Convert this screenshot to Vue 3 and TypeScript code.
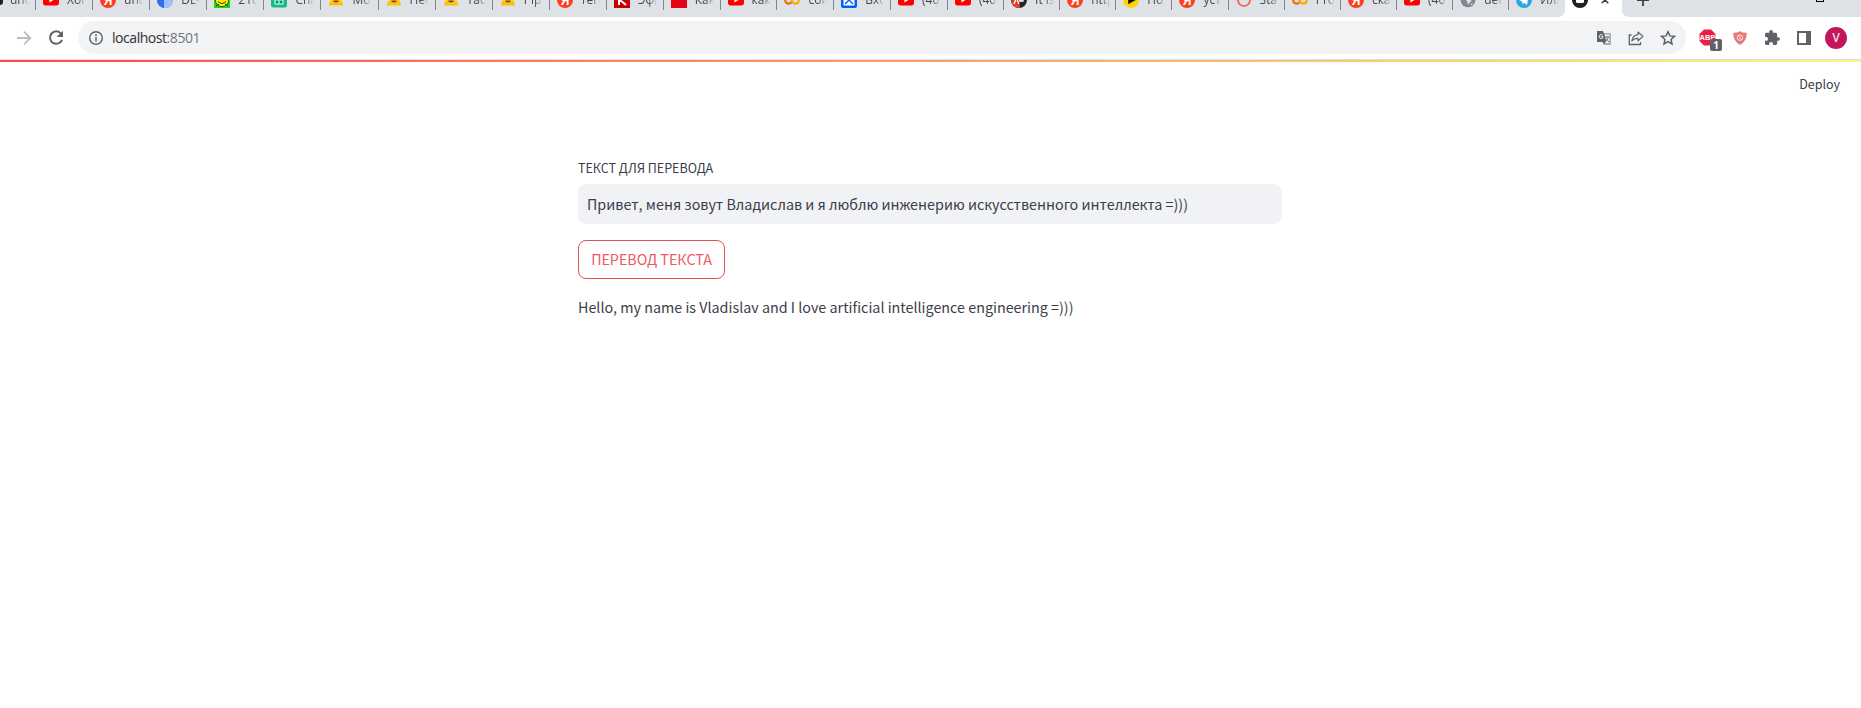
<script setup lang="ts">
interface Tab {
  icon: string
  title: string
}

const tabs: Tab[] = [
  { icon: 'youtube', title: 'Хоп' },
  { icon: 'yandex', title: 'unc' },
  { icon: 'blue', title: 'DL-' },
  { icon: 'smile', title: '21с' },
  { icon: 'robot', title: 'Cha' },
  { icon: 'hug', title: 'Mo' },
  { icon: 'hug', title: 'Hel' },
  { icon: 'hug', title: 'Tac' },
  { icon: 'hug', title: 'Pip' },
  { icon: 'yandex', title: 'тега' },
  { icon: 'k', title: 'Эф(' },
  { icon: 'red', title: 'Как' },
  { icon: 'youtube', title: 'как' },
  { icon: 'colab', title: 'coll' },
  { icon: 'mail', title: 'Вхо' },
  { icon: 'youtube', title: '(40' },
  { icon: 'youtube', title: '(40' },
  { icon: 'ap', title: 'It is' },
  { icon: 'yandex', title: 'http' },
  { icon: 'play', title: 'По' },
  { icon: 'yandex', title: 'уст' },
  { icon: 'ring', title: 'Sta' },
  { icon: 'colab', title: 'Pro' },
  { icon: 'yandex', title: 'ска' },
  { icon: 'youtube', title: '(40' },
  { icon: 'globe', title: 'def' },
  { icon: 'telegram', title: 'Илл' },
]

function tabWidth(i: number): number {
  if (i < 10) return 57.1
  if (i < 16) return 56.83
  return 56.15
}
</script>

<template>
  <div class="window">
    <div class="tabstrip">
      <div class="tab tab-cut">
        <span class="dot"></span>
        <span class="title">unc</span>
      </div>
      <div
        v-for="(tab, i) in tabs"
        :key="i"
        class="tab"
        :class="{ last: i === tabs.length - 1 }"
        :style="{ width: tabWidth(i) + 'px' }"
      >
        <svg class="favicon" viewBox="0 0 16 16">
          <template v-if="tab.icon === 'youtube'">
            <rect x="0" y="2" width="16" height="11.4" rx="2.6" fill="#f00" />
            <path d="M6.4 5.2v5.2l4.4-2.6z" fill="#fff" />
          </template>
          <template v-else-if="tab.icon === 'yandex'">
            <circle cx="8" cy="8" r="8" fill="#fc3f1d" />
            <text x="8" y="13" class="ya">Я</text>
          </template>
          <template v-else-if="tab.icon === 'blue'">
            <circle cx="8" cy="8" r="8" fill="#5b8ff5" />
            <path d="M0 8h7v8A8 8 0 0 1 0 8z" fill="#2f6df0" />
            <path d="M7 6h9v2a8 8 0 0 1-9 8z" fill="#9fc0fb" />
          </template>
          <template v-else-if="tab.icon === 'smile'">
            <rect width="16" height="16" fill="#0be30b" />
            <circle cx="8" cy="8" r="6.6" fill="#fff200" stroke="#333" stroke-width=".8" />
            <path d="M4 9.5q4 4 8 0M2 14l3-2M14 14l-3-2" fill="none" stroke="#333" />
          </template>
          <template v-else-if="tab.icon === 'robot'">
            <rect width="16" height="15.5" rx="2.5" fill="#19b888" />
            <rect x="3" y="7" width="10" height="6" rx="2" fill="#7fe3c2" />
            <circle cx="6" cy="10" r="1.2" fill="#0b7f5b" />
            <circle cx="10" cy="10" r="1.2" fill="#0b7f5b" />
          </template>
          <template v-else-if="tab.icon === 'hug'">
            <circle cx="8" cy="7" r="6.2" fill="#ffd21e" />
            <path d="M1 13.5q0-4 3-4.5l2 2h4l2-2q3 .5 3 4.5z" fill="#ffbe0a" />
            <path d="M5.4 8.6h5.2v1.2q-2.6 1.6-5.2 0z" fill="#6b4b2a" />
          </template>
          <template v-else-if="tab.icon === 'k'">
            <rect width="16" height="16" fill="#c40000" />
            <path d="M5 3v10M11.5 3L6 8l6 5" fill="none" stroke="#fff" stroke-width="2" />
          </template>
          <template v-else-if="tab.icon === 'red'">
            <rect width="16" height="16" fill="#e30613" />
            <path d="M8 0h8v8z" fill="#f6402a" />
          </template>
          <template v-else-if="tab.icon === 'colab'">
            <circle cx="4.6" cy="8.3" r="3.4" fill="none" stroke="#e8710a" stroke-width="2.2" />
            <circle cx="11.4" cy="8.3" r="3.4" fill="none" stroke="#f9ab00" stroke-width="2.2" />
          </template>
          <template v-else-if="tab.icon === 'mail'">
            <rect width="16" height="16" rx="2" fill="#005ff9" />
            <rect x="2.5" y="4" width="11" height="9.5" fill="#fff" />
            <path d="M4 12l4-4 4 4" fill="none" stroke="#005ff9" stroke-width="1.4" />
          </template>
          <template v-else-if="tab.icon === 'ap'">
            <circle cx="8" cy="8" r="8" fill="#252525" />
            <path d="M8 0A8 8 0 1 0 9 16L8 10l4-8z" fill="#ef4023" />
            <path d="M3 12L5.5 6 8 12M9 10V6h3v3h-3" fill="none" stroke="#fff" stroke-width="1.3" />
          </template>
          <template v-else-if="tab.icon === 'play'">
            <circle cx="8" cy="8" r="8" fill="#ffd400" />
            <path d="M5.2 3.5v8.8l7.8-4.4z" fill="#111" />
          </template>
          <template v-else-if="tab.icon === 'ring'">
            <circle cx="8" cy="8" r="6" fill="none" stroke="#f05a4a" stroke-width="1.7" />
          </template>
          <template v-else-if="tab.icon === 'globe'">
            <circle cx="8" cy="8" r="7.3" fill="#80868b" />
            <path d="M3 6l4 3 1 4 2-3 2-1-3-2-4-2zM10 12l3-1-1 2z" fill="#dee1e6" />
          </template>
          <template v-else>
            <circle cx="8" cy="8" r="8" fill="#2ca5e0" />
            <path d="M3 8l9.5-4-1.5 9-3-2.2-1.5 1.4-.4-2.6z" fill="#fff" />
          </template>
        </svg>
        <span class="title">{{ tab.title }}</span>
      </div>
      <div class="tab-active">
        <svg class="fav-active" viewBox="0 0 16 16">
          <circle cx="8" cy="8" r="8" fill="#202124" />
          <rect x="4" y="6" width="8" height="5" rx="1.5" fill="#fff" />
        </svg>
        <svg class="close" viewBox="0 0 8 8">
          <path d="M.7.7l6.6 6.6M7.3.7L.7 7.3" stroke="#3c4043" stroke-width="1.5" />
        </svg>
      </div>
      <div class="strip-rest">
        <svg class="plus" viewBox="0 0 14 14">
          <path d="M7 1v12M1 7h12" stroke="#3c4043" stroke-width="1.8" />
        </svg>
        <span class="maximize"></span>
      </div>
    </div>

    <div class="toolbar">
      <svg class="forward" viewBox="0 0 16 16">
        <path d="M1 8h13M8 1.7L14.3 8 8 14.3" fill="none" stroke="#babcbe" stroke-width="1.8" />
      </svg>
      <svg class="reload" viewBox="0 0 16 16">
        <path d="M13 3.6A6.2 6.2 0 1 0 14 9.8" fill="none" stroke="#5f6368" stroke-width="2" />
        <path d="M15 .8v6.3H8.7z" fill="#5f6368" />
      </svg>
      <div class="omnibox">
        <svg class="info" viewBox="0 0 16 16">
          <circle cx="8" cy="8" r="6.3" fill="none" stroke="#5f6368" stroke-width="1.4" />
          <path d="M8 7v4.5M8 4.3v1.6" stroke="#5f6368" stroke-width="1.5" />
        </svg>
        <span class="url">localhost<span class="port">:8501</span></span>
        <div class="omni-actions">
          <svg viewBox="0 0 16 16">
            <path d="M1 1h6l1 2.5h6.5v11H7.5L6.8 12H1z" fill="#5f6368" />
            <path d="M8.4 4.3h5.3v9.3H8.2l2-2z" fill="#f1f3f4" />
            <path d="M6.7 5.3A2 2 0 1 0 6.6 8q.5-.5.4-1.3H5" fill="none" stroke="#f1f3f4" />
            <path d="M9 7h4.5M11 6v1M12.5 7q-.8 2.8-3 4M10 8.5l3 3.5" fill="none" stroke="#5f6368" stroke-width=".9" />
          </svg>
          <svg viewBox="0 0 16 16">
            <path d="M3.5 5H1.3v9.5h11.2V12" fill="none" stroke="#5f6368" stroke-width="1.3" />
            <path d="M10 2l5 4.4-5 4.4V8.3Q6 8.2 3.8 11 4.7 5.3 10 4.6z" fill="none" stroke="#5f6368" stroke-width="1.2" stroke-linejoin="round" />
          </svg>
          <svg viewBox="0 0 16 16">
            <path d="M8 1.7l1.9 4.2 4.6.5-3.4 3.1.9 4.5-4-2.3L4 14l.9-4.5L1.5 6.4l4.6-.5z" fill="none" stroke="#5f6368" stroke-width="1.5" />
          </svg>
        </div>
      </div>
      <div class="extensions">
        <div class="abp">
          <svg viewBox="0 0 17 17">
            <path d="M5 .5h7L16.500 5v7L12 16.500H5L.5 12V5z" fill="#ed1e45" />
            <text x="8.5" y="11.3" class="abp-text">ABP</text>
          </svg>
          <span class="badge">1</span>
        </div>
        <svg class="shield" viewBox="0 0 14 14">
          <path d="M7 .3Q10 2 13.7 1.8 14.2 10 7 13.900-.2 10 .3 1.8 4 2 7 .3z" fill="#e9787a" />
          <circle cx="7" cy="6.7" r="2.7" fill="none" stroke="#fff" stroke-width=".8" />
          <path d="M5.2 5l3.6 3.5" stroke="#fff" stroke-width=".8" />
        </svg>
        <svg class="puzzle" viewBox="2 1 21 21">
          <path d="M20.5 11H19V7c0-1.1-.9-2-2-2h-4V3.5a2.5 2.5 0 0 0-5 0V5H4c-1.1 0-2 .9-2 2v3.8h1.5a2.7 2.7 0 0 1 0 5.4H2V20c0 1.1.9 2 2 2h3.8v-1.5a2.7 2.7 0 0 1 5.4 0V22H17c1.1 0 2-.9 2-2v-4h1.5a2.5 2.5 0 0 0 0-5z" fill="#5f6368" />
        </svg>
        <span class="panel"></span>
        <span class="avatar">V</span>
      </div>
    </div>

    <div class="decoration"></div>
    <header class="app-header">Deploy</header>
    <main class="content">
      <label class="label">ТЕКСТ ДЛЯ ПЕРЕВОДА</label>
      <div class="input"><span>Привет, меня зовут Владислав и я люблю инженерию искусственного интеллекта =)))</span></div>
      <button class="button">ПЕРЕВОД ТЕКСТА</button>
      <p class="result"><span>Hello, my name is Vladislav and I love artificial intelligence engineering =)))</span></p>
    </main>
  </div>
</template>

<style>
body {
  margin: 0;
  background: #fff;
}
</style>

<style scoped>
.window {
  width: 1861px;
  height: 708px;
  overflow: hidden;
  background: #fff;
  box-sizing: border-box;
}
.window * {
  box-sizing: border-box;
}
svg {
  display: block;
  flex: none;
}
.tabstrip {
  display: flex;
  height: 17px;
  background: #fff;
  overflow: hidden;
  font: 12px/16px "Open Sans", sans-serif;
  color: #45494d;
}
.tab {
  display: flex;
  align-items: flex-start;
  flex: none;
  height: 17px;
  padding-left: 7px;
  background: linear-gradient(#80868b, #80868b) right 0 top 0 / 1px 10px no-repeat #dee1e6;
}
.tab.last {
  background: #dee1e6;
  border-bottom-right-radius: 7px;
}
.tab-cut {
  width: 36px;
  padding-left: 0;
}
.dot {
  width: 3px;
  height: 5px;
  margin-right: 7px;
  background: #202124;
  border-radius: 0 0 3px 0;
}
.favicon {
  width: 16px;
  height: 16px;
  margin: -8px 8px 0 0;
}
.title {
  width: 19px;
  margin-top: -8px;
  overflow: hidden;
  white-space: nowrap;
  -webkit-mask-image: linear-gradient(90deg, #000 55%, transparent);
  mask-image: linear-gradient(90deg, #000 55%, transparent);
}
.ya {
  font: bold 12px "Liberation Sans", sans-serif;
  fill: #fff;
  text-anchor: middle;
}
.tab-active {
  display: flex;
  flex: none;
  width: 57px;
  padding-left: 7px;
  background: #fff;
}
.fav-active {
  width: 16px;
  height: 16px;
  margin-top: -8px;
}
.close {
  width: 8px;
  height: 8px;
  margin: -4px 0 0 13px;
}
.strip-rest {
  display: flex;
  flex: 1;
  justify-content: space-between;
  padding: 0 37px 0 14px;
  background: #dee1e6;
  border-bottom-left-radius: 7px;
}
.plus {
  width: 14px;
  height: 14px;
  margin-top: -7px;
}
.maximize {
  width: 8px;
  height: 8px;
  margin-top: -6px;
  border: 1px solid #000;
}
.toolbar {
  display: flex;
  align-items: center;
  height: 43px;
  padding: 0 14px 1px 16px;
  border-bottom: 1px solid #dfdce4;
}
.forward {
  width: 16px;
  height: 16px;
  margin-right: 16px;
}
.reload {
  width: 16px;
  height: 16px;
  margin-right: 14px;
}
.omnibox {
  display: flex;
  align-items: center;
  flex: none;
  width: 1608px;
  height: 33px;
  padding: 0 10px;
  border-radius: 17px;
  background: #f1f3f4;
}
.info {
  width: 16px;
  height: 16px;
  margin-right: 8px;
}
.url {
  font: 14px/20px "Open Sans", sans-serif;
  letter-spacing: -0.45px;
  color: #303134;
}
.port {
  color: #74777b;
}
.omni-actions {
  display: flex;
  gap: 16px;
  margin-left: auto;
}
.omni-actions svg {
  width: 16px;
  height: 16px;
}
.extensions {
  display: flex;
  align-items: center;
  flex: 1;
  padding-left: 13px;
}
.abp {
  position: relative;
  width: 17px;
  height: 17px;
  margin-right: 17px;
}
.abp svg {
  width: 17px;
  height: 17px;
}
.abp-text {
  font: bold 7.5px "Liberation Sans", sans-serif;
  fill: #fff;
  text-anchor: middle;
}
.badge {
  position: absolute;
  left: 11px;
  top: 10px;
  width: 12px;
  height: 12px;
  border-radius: 2px;
  background: #5f6368;
  color: #fff;
  font: bold 10px/12px "Open Sans", sans-serif;
  text-align: center;
}
.shield {
  width: 14px;
  height: 14px;
  margin-right: 18px;
}
.puzzle {
  width: 15px;
  height: 15px;
  margin-right: 17px;
}
.panel {
  width: 14px;
  height: 14px;
  margin-right: 14px;
  border: 2px solid #5f6368;
  border-right-width: 5px;
}
.avatar {
  width: 22px;
  height: 22px;
  border-radius: 50%;
  background: #c2185b;
  color: #fff;
  font: 12px/22px Roboto, sans-serif;
  text-align: center;
}
.decoration {
  height: 2px;
  background: linear-gradient(90deg, #fa4b4d, #fbf880);
}
.app-header,
.content {
  font-family: "Noto Sans CJK JP", "Noto Sans", sans-serif;
  color: #3b3d49;
}
.app-header {
  height: 44px;
  padding-right: 21px;
  font-size: 12.5px;
  line-height: 44px;
  text-align: right;
}
.content {
  width: 704px;
  margin: 52px 0 0 578px;
}
.label {
  display: block;
  height: 26px;
  font-size: 12.5px;
  line-height: 20px;
  white-space: nowrap;
}
.input {
  height: 40px;
  padding: 0 9px;
  border-radius: 8px;
  background: #f0f2f6;
  font-size: 14.33px;
  line-height: 40px;
  white-space: nowrap;
}
.button {
  display: block;
  width: 147px;
  height: 39px;
  margin: 16px 0;
  padding: 0 0 1px;
  border: 1px solid #e05257;
  border-radius: 8px;
  background: #fff;
  color: #ec5a5e;
  font-family: inherit;
  font-size: 14.31px;
  line-height: 36px;
  white-space: nowrap;
}
.result {
  margin: 0;
  font-size: 14.33px;
  line-height: 23px;
  white-space: nowrap;
}
</style>
